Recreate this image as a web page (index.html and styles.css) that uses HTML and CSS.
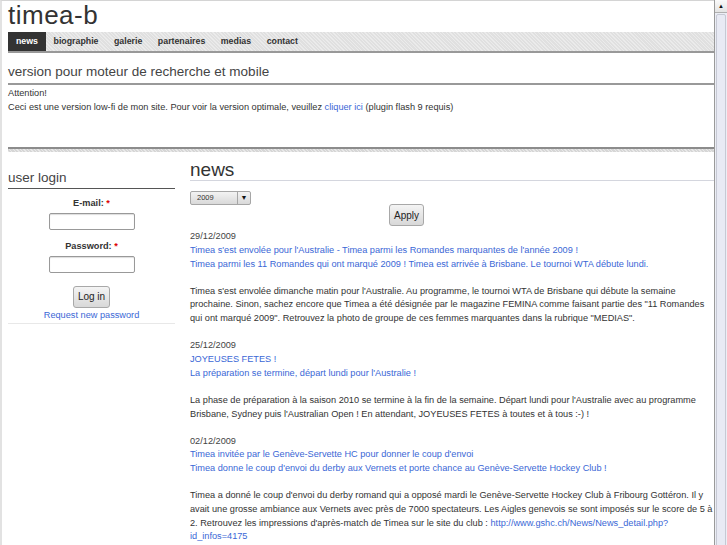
FILE: index.html
```html
<!DOCTYPE html>
<html lang="fr">
<head>
    <meta charset="UTF-8">
    <title>timea-b</title>
    <link rel="stylesheet" href="styles.css">
</head>
<body>
    <div class="page">
        <h1 class="site-name">timea-b</h1>
        <ul class="nav">
            <li class="active"><a href="#">news</a></li>
            <li><a href="#">biographie</a></li>
            <li><a href="#">galerie</a></li>
            <li><a href="#">partenaires</a></li>
            <li><a href="#">medias</a></li>
            <li><a href="#">contact</a></li>
        </ul>

        <div class="notice">
            <h2 class="notice-title">version pour moteur de recherche et mobile</h2>
            <p>Attention!<br>Ceci est une version low-fi de mon site. Pour voir la version optimale, veuillez <a href="#">cliquer ici</a> (plugin flash 9 requis)</p>
        </div>
        <div class="separator"></div>

        <div class="columns">
            <!-- login block -->
            <div class="sidebar">
                <h2 class="block-title">user login</h2>
                <form class="login-form">
                    <div class="field">
                        <label>E-mail: <span class="required">*</span></label>
                        <input type="text">
                    </div>
                    <div class="field">
                        <label>Password: <span class="required">*</span></label>
                        <input type="password">
                    </div>
                    <button type="button" class="button">Log in</button>
                    <a class="request-link" href="#">Request new password</a>
                </form>
            </div>

            <!-- news list -->
            <div class="content">
                <h2 class="content-title">news</h2>
                <div class="year-select"><span class="year-value">2009</span><span class="year-arrow">&#9660;</span></div>
                <button type="button" class="button apply-button">Apply</button>

                <div class="news-item">
                    <div class="date">29/12/2009</div>
                    <a class="news-link" href="#">Timea s'est envolée pour l'Australie - Timea parmi les Romandes marquantes de l'année 2009 !</a>
                    <a class="news-link" href="#">Timea parmi les 11 Romandes qui ont marqué 2009 ! Timea est arrivée à Brisbane. Le tournoi WTA débute lundi.</a>
                    <p class="news-body">Timea s'est envolée dimanche matin pour l'Australie. Au programme, le tournoi WTA de Brisbane qui débute la semaine prochaine. Sinon, sachez encore que Timea a été désignée par le magazine FEMINA comme faisant partie des "11 Romandes qui ont marqué 2009". Retrouvez la photo de groupe de ces femmes marquantes dans la rubrique "MEDIAS".</p>
                </div>

                <div class="news-item">
                    <div class="date">25/12/2009</div>
                    <a class="news-link" href="#">JOYEUSES FETES !</a>
                    <a class="news-link" href="#">La préparation se termine, départ lundi pour l'Australie !</a>
                    <p class="news-body">La phase de préparation à la saison 2010 se termine à la fin de la semaine. Départ lundi pour l'Australie avec au programme Brisbane, Sydney puis l'Australian Open ! En attendant, JOYEUSES FETES à toutes et à tous :-) !</p>
                </div>

                <div class="news-item">
                    <div class="date">02/12/2009</div>
                    <a class="news-link" href="#">Timea invitée par le Genève-Servette HC pour donner le coup d'envoi</a>
                    <a class="news-link" href="#">Timea donne le coup d'envoi du derby aux Vernets et porte chance au Genève-Servette Hockey Club !</a>
                    <p class="news-body">Timea a donné le coup d'envoi du derby romand qui a opposé mardi le Genève-Servette Hockey Club à Fribourg Gottéron. Il y avait une grosse ambiance aux Vernets avec près de 7000 spectateurs. Les Aigles genevois se sont imposés sur le score de 5 à 2. Retrouvez les impressions d'après-match de Timea sur le site du club : <a href="#">http://www.gshc.ch/News/News_detail.php?<wbr>id_infos=4175</a></p>
                </div>
            </div>
        </div>
    </div>

    <!-- fake window scrollbar -->
    <div class="scrollbar">
        <div class="scroll-button">&#9650;</div>
        <div class="scroll-thumb"></div>
    </div>
</body>
</html>
```

FILE: styles.css
```css
html {
    overflow: hidden;
}
body {
    margin: 0;
    padding: 0;
    font-family: 'Liberation Sans', Arial, sans-serif;
    font-size: 9.2px;
    line-height: 13.64px;
    color: #333;
    background-color: #fff;
}
a {
    color: #3a67d6;
    text-decoration: none;
}
.page {
    margin-right: 13px;
    border-top: 1px solid #d4d4d4;
    border-left: 2px solid #e2e2e2;
    padding-left: 6px;
    min-height: 700px;
}
.site-name {
    margin: 0 0 3px 0;
    font-size: 26px;
    line-height: 28px;
    font-weight: normal;
    letter-spacing: 0.5px;
    color: #333;
}

/* Navigation */
.nav {
    list-style: none;
    margin: 0;
    padding: 0;
    display: flex;
    height: 19px;
    background: repeating-linear-gradient(45deg, #ebebeb 0, #ebebeb 1px, #e0e0e0 1px, #e0e0e0 2.5px);
    border-bottom: 2px solid #999;
}
.nav li a {
    display: block;
    padding: 0 7.5px 0 8px;
    line-height: 19px;
    font-size: 8.8px;
    font-weight: bold;
    color: #333;
}
.nav li.active a {
    background-color: #333;
    color: #fff;
}

.notice-title {
    margin: 11px 0 0 0;
    padding-bottom: 3px;
    font-size: 13.5px;
    line-height: 16px;
    font-weight: normal;
    color: #444;
    border-bottom: 2px solid #999;
}
.notice p {
    margin: 2px 0 0 0;
}
.separator {
    margin-top: 33px;
    height: 3px;
    border-top: 2px solid #8c8c8c;
    background: repeating-linear-gradient(45deg, #e8e8e8 0, #e8e8e8 1px, #d6d6d6 1px, #d6d6d6 2.5px);
}

.columns {
    display: grid;
    grid-template-columns: 167px 1fr;
    gap: 15px;
}

/* Sidebar login */
.block-title {
    margin: 18px 0 0 0;
    padding-bottom: 2px;
    font-size: 13.5px;
    line-height: 16px;
    font-weight: normal;
    color: #444;
    border-bottom: 1px solid #555;
}
.login-form {
    text-align: center;
    padding: 8px 0 1px 0;
    border-bottom: 1px solid #e8e8e8;
}
.field {
    margin-bottom: 10px;
}
.field label {
    display: block;
    font-weight: bold;
}
.required {
    color: #d00;
}
.field input {
    display: block;
    margin: 2px auto 0 auto;
    width: 86px;
    height: 17px;
    box-sizing: border-box;
    border: 1px solid #999;
    border-radius: 2px;
    box-shadow: inset 0 1px 1px #ddd;
}
.button {
    font-family: 'Liberation Sans', Arial, sans-serif;
    font-size: 10px;
    color: #222;
    padding: 0 4px;
    height: 22px;
    white-space: nowrap;
    border: 1px solid #a8a8a8;
    border-radius: 3px;
    background: linear-gradient(#f4f4f4, #d8d8d8);
}
.login-form .button {
    display: block;
    margin: 13px auto 1px auto;
}
.request-link {
    display: block;
}

/* News */
.content-title {
    margin: 8px 0 0 0;
    font-size: 19px;
    line-height: 20px;
    font-weight: normal;
    color: #333;
    border-bottom: 1px solid #d4d6de;
}
.year-select {
    display: flex;
    margin-top: 10px;
    width: 61px;
    height: 14px;
    box-sizing: border-box;
    border: 1px solid #a6a6a6;
    border-radius: 2px;
    background: linear-gradient(#f3f3f3, #d9d9d9);
    font-size: 7.5px;
    line-height: 12px;
}
.year-value {
    flex: 1;
    padding-left: 6px;
}
.year-arrow {
    width: 12px;
    text-align: center;
    border-left: 1px solid #a6a6a6;
    font-size: 7px;
    color: #111;
}
.apply-button {
    display: block;
    margin: -1px 0 0 199px;
}
.news-item {
    margin-top: 4px;
}
.news-item + .news-item {
    margin-top: 0;
}
.date {
    color: #444;
}
.news-link {
    display: block;
}
.news-body {
    margin: 13.64px 0;
}

/* Scrollbar */
.scrollbar {
    position: fixed;
    top: 0;
    right: 0;
    width: 13px;
    height: 100%;
    box-sizing: border-box;
    border-left: 1px solid #9a9a9a;
    background-color: #eceef5;
}
.scroll-button {
    height: 12px;
    border-bottom: 1px solid #b0b0b0;
    background: linear-gradient(#fafafa, #e4e4e4);
    font-size: 6px;
    line-height: 12px;
    text-align: center;
    color: #111;
}
.scroll-thumb {
    margin: 1px 1px 0 1px;
    height: 700px;
    border: 1px solid #c6c9d4;
    border-radius: 2px;
    background-color: #e8eaf4;
}
```
